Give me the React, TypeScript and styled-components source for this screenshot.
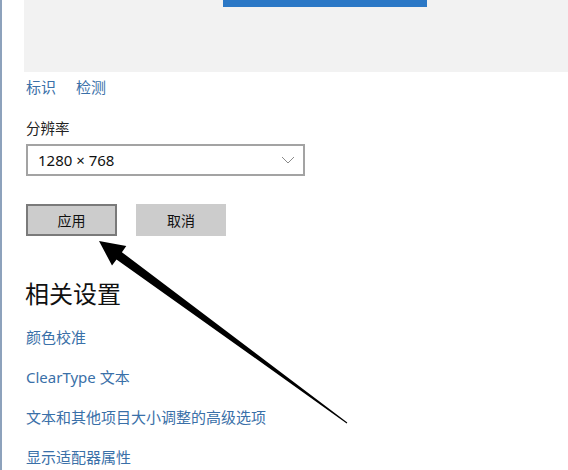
import styled, { createGlobalStyle } from 'styled-components'

const GlobalStyle = createGlobalStyle`
  html, body {
    margin: 0;
    padding: 0;
    background: #ffffff;
  }
  body {
    font-family: "Noto Sans", "Noto Sans CJK SC", sans-serif;
    color: #1a1a1a;
  }
`

const Page = styled.div`
  position: relative;
  width: 568px;
  height: 470px;
  overflow: hidden;
  border-left: 2px solid #8da2bc;
  padding-left: 22px;
  box-sizing: border-box;
  background: #ffffff;
`

const Preview = styled.div`
  height: 72px;
  background: #f2f2f2;
`

const ScreenBar = styled.div`
  width: 204px;
  height: 7px;
  margin-left: 199px;
  background: #2b78c6;
`

const LinkRow = styled.div`
  display: flex;
  gap: 20px;
  margin-top: 5px;
  padding-left: 2px;
`

const Link = styled.a<{ $gap?: number }>`
  display: block;
  font-family: "Noto Sans", "Noto Sans CJK SC", sans-serif;
  font-size: 15px;
  line-height: 20px;
  height: 20px;
  color: #3a70a8;
  text-decoration: none;
  margin-top: ${(p) => p.$gap ?? 0}px;
  white-space: nowrap;
`

const Label = styled.div`
  margin-top: 21px;
  padding-left: 2px;
  font-size: 14.5px;
  line-height: 20px;
  color: #222;
`

const Select = styled.div`
  display: flex;
  align-items: center;
  justify-content: space-between;
  box-sizing: border-box;
  width: 279px;
  height: 32px;
  margin-top: 6px;
  margin-left: 2px;
  padding: 0 8px 0 10px;
  border: 2px solid #a3a3a3;
  background: #fff;
  font-size: 15px;
  color: #111;
`

const ButtonRow = styled.div`
  display: flex;
  gap: 19px;
  margin-top: 28px;
  padding-left: 2px;
`

const Button = styled.button<{ $primary?: boolean }>`
  box-sizing: border-box;
  width: ${(p) => (p.$primary ? 91 : 90)}px;
  height: 32px;
  padding: 0;
  border: ${(p) => (p.$primary ? '2px solid #7a7a7a' : 'none')};
  background: #cccccc;
  font-family: "Noto Sans", "Noto Sans CJK SC", sans-serif;
  font-size: 14px;
  color: #111;
`

const Heading = styled.h2`
  margin: 42px 0 0;
  padding-left: 1px;
  font-size: 24px;
  font-weight: 400;
  line-height: 32px;
  color: #111;
`

const Related = styled.div`
  display: flex;
  flex-direction: column;
  margin-top: 17px;
  padding-left: 2px;
`

const ArrowLayer = styled.svg`
  position: absolute;
  left: 0;
  top: 0;
  pointer-events: none;
`

const Chevron = () => (
  <svg width="14" height="8" viewBox="0 0 14 8">
    <path d="M1 1 L7 7 L13 1" fill="none" stroke="#8a8a8a" strokeWidth="1" />
  </svg>
)

const App = () => {
  const links = ['颜色校准', 'ClearType 文本', '文本和其他项目大小调整的高级选项', '显示适配器属性']
  return (
    <>
      <GlobalStyle />
      <Page>
        <Preview>
          <ScreenBar />
        </Preview>

        <LinkRow>
          <Link>标识</Link>
          <Link>检测</Link>
        </LinkRow>

        <Label>分辨率</Label>
        <Select>
          <span>1280 × 768</span>
          <Chevron />
        </Select>

        <ButtonRow>
          <Button $primary>应用</Button>
          <Button>取消</Button>
        </ButtonRow>

        <Heading>相关设置</Heading>
        <Related>
          {links.map((l, i) => (
            <Link key={l} $gap={i === 0 ? 0 : 20}>
              {l}
            </Link>
          ))}
        </Related>

        <ArrowLayer width="568" height="470" viewBox="0 0 568 470">
          <polygon
            points="97,241 124.3,246.1 119.9,252.2 345.3,422.6 344.7,423.4 114.5,259.4 110,265.5"
            fill="#000"
          />
        </ArrowLayer>
      </Page>
    </>
  )
}

export default App
